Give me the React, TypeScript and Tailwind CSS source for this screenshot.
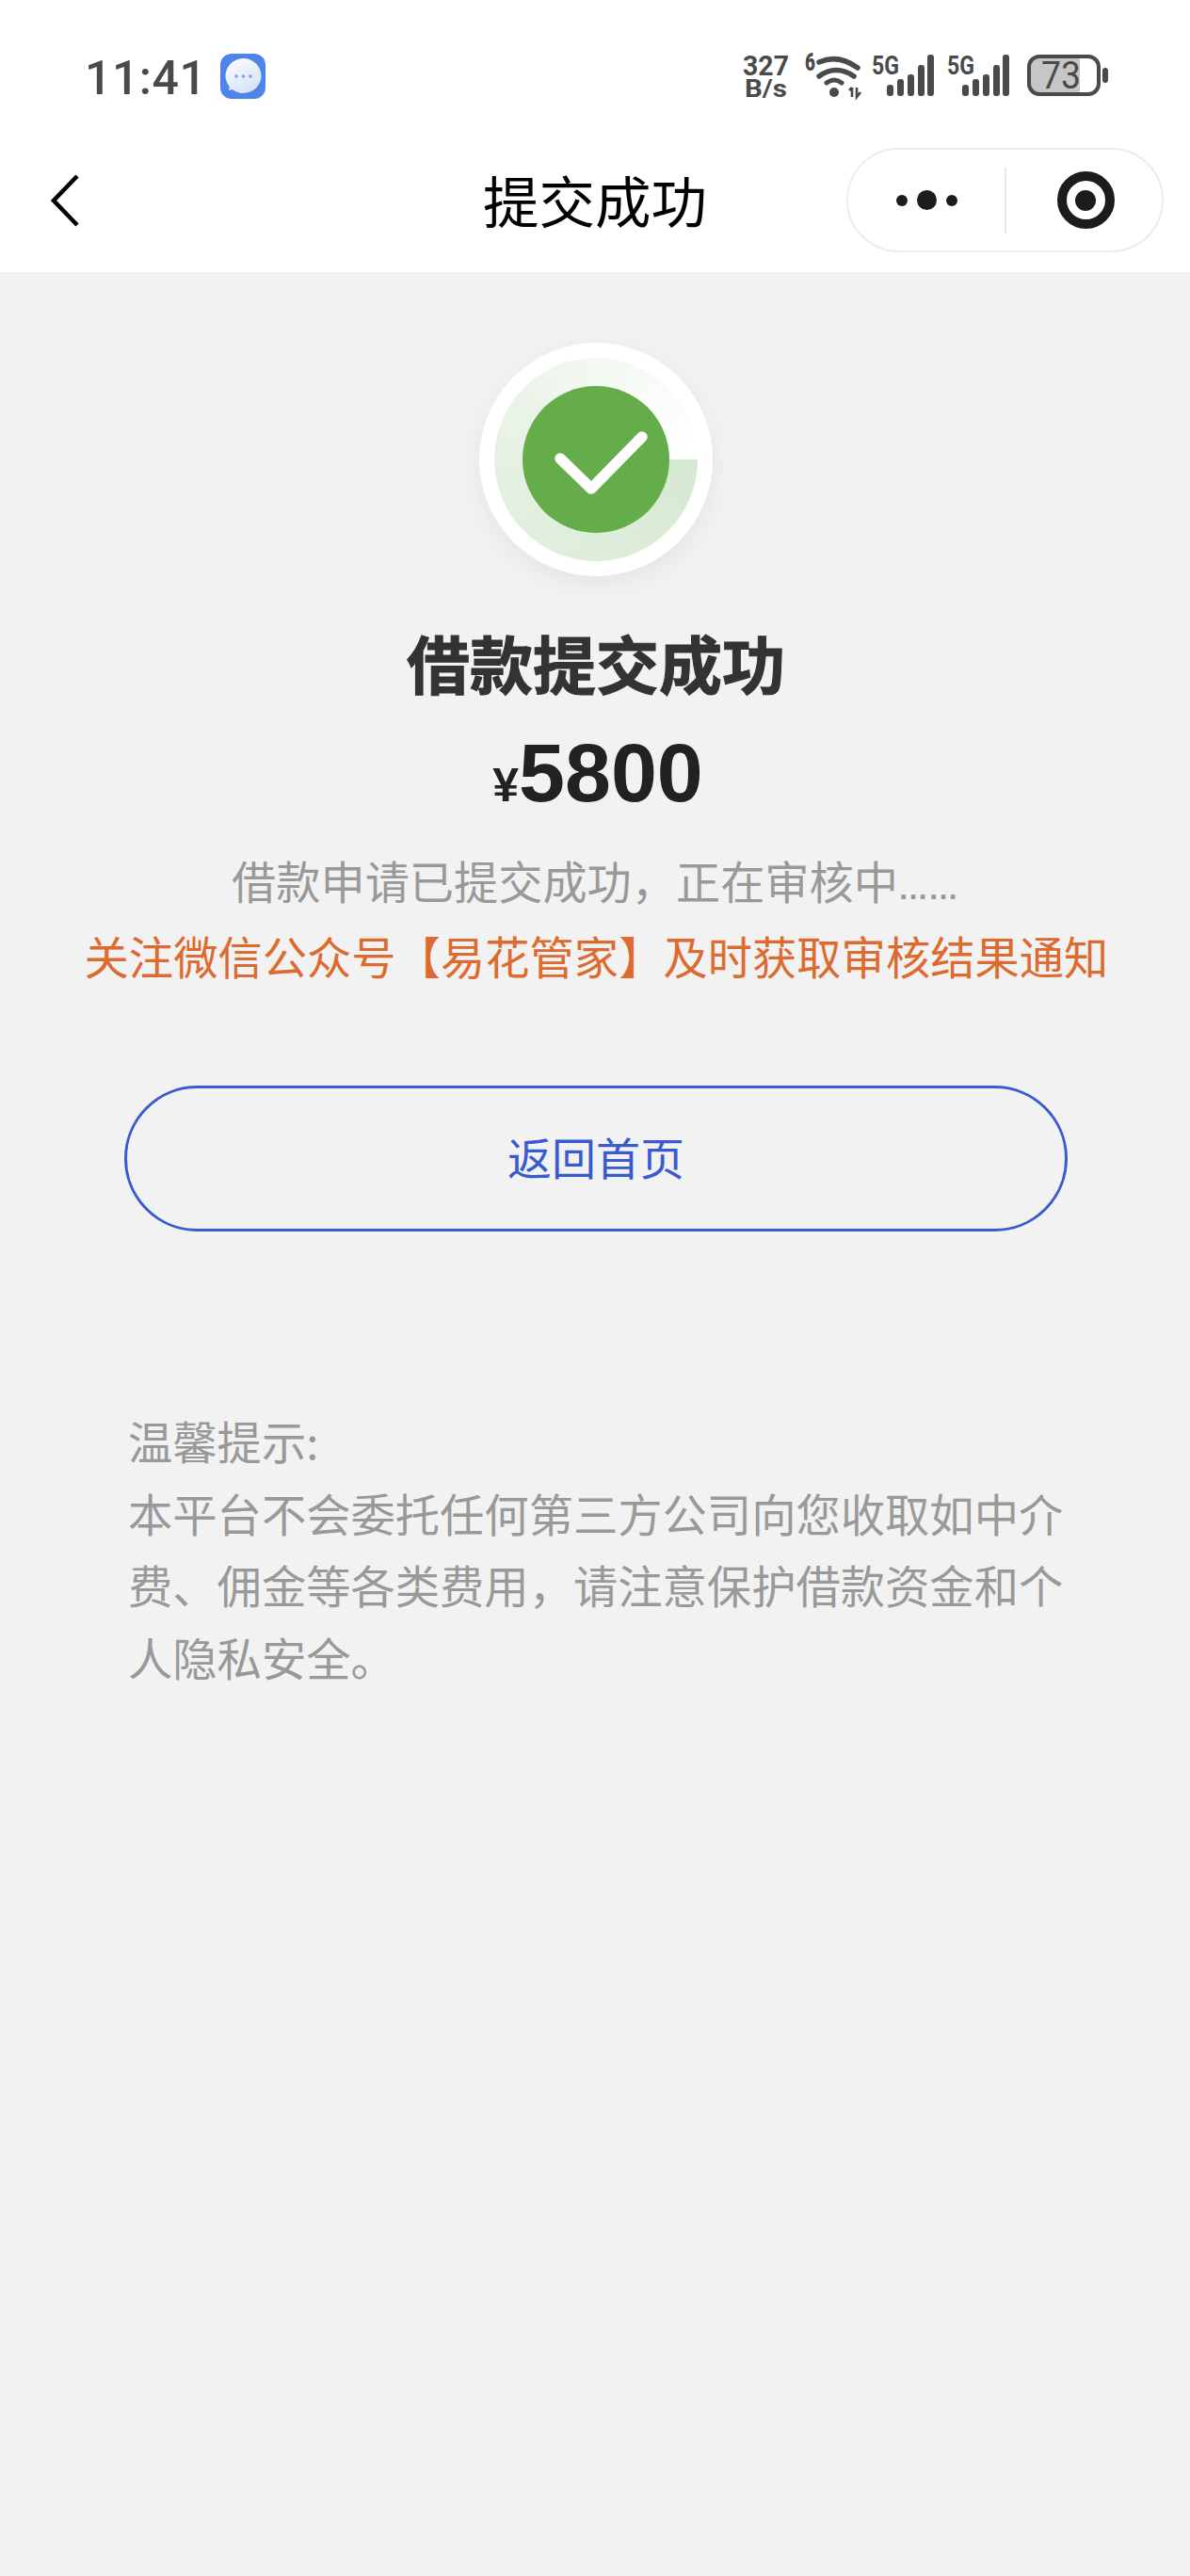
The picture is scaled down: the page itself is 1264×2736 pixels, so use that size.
const cjk = "font-['Noto_Sans_CJK_SC','Noto_Sans',sans-serif]";

function ChatIcon() {
  return (
    <svg width="48" height="48" viewBox="0 0 48 48" className="ml-[15px] mt-[-1px]">
      <defs>
        <linearGradient id="bubble" x1="0" y1="0" x2="0.6" y2="1">
          <stop offset="0" stopColor="#ffffff" />
          <stop offset="1" stopColor="#d5e3f8" />
        </linearGradient>
      </defs>
      <rect width="48" height="48" rx="12" fill="#4f84ea" />
      <path d="M9 39 L11 30 L17 37 Z" fill="#e6effb" />
      <ellipse cx="24.5" cy="23.5" rx="19" ry="18.5" fill="url(#bubble)" />
      <circle cx="17" cy="24" r="1.8" fill="#7fa4df" />
      <circle cx="24.5" cy="24" r="1.8" fill="#7fa4df" />
      <circle cx="32" cy="24" r="1.8" fill="#7fa4df" />
    </svg>
  );
}

function NetSpeed() {
  return (
    <svg width="50" height="46" viewBox="0 0 50 46" fill="#4a4a4a" className="font-['Roboto',sans-serif] overflow-visible">
      <text x="1" y="22" fontSize="29" fontWeight="700" textLength="49" lengthAdjust="spacingAndGlyphs">327</text>
      <text x="3" y="45" fontSize="26" fontWeight="700" textLength="45" lengthAdjust="spacingAndGlyphs">B/s</text>
    </svg>
  );
}

function Wifi() {
  return (
    <svg width="60" height="46" viewBox="0 0 60 46" fill="none" stroke="#4a4a4a" className="font-['Roboto',sans-serif] overflow-visible">
      <text x="0" y="17" fontSize="25" fontWeight="900" fill="#4a4a4a" stroke="none" textLength="11" lengthAdjust="spacingAndGlyphs">6</text>
      <path d="M15 8 Q35 -1 56 14" strokeWidth="5.5" strokeLinecap="round" />
      <path d="M15 23 Q33 10 52 23" strokeWidth="5.5" strokeLinecap="round" />
      <path d="M23 30 Q31 24 39 30" strokeWidth="5" strokeLinecap="round" />
      <circle cx="31" cy="40" r="5" fill="#4a4a4a" stroke="none" />
      <path d="M50 35 V45 M47 38 L50 35 M55 35 V45 L59 40" strokeWidth="2.6" />
    </svg>
  );
}

function Signal() {
  const bars = [
    [16, 32],
    [27, 26],
    [38, 21],
    [49, 11],
    [59, 0],
  ];
  return (
    <svg width="66" height="44" viewBox="0 0 66 44" fill="#4a4a4a" className="font-['Roboto',sans-serif] overflow-visible">
      <text x="0" y="21" fontSize="28" fontWeight="700" textLength="29" lengthAdjust="spacingAndGlyphs">5G</text>
      {bars.map(([x, y]) => (
        <rect key={x} x={x} y={y} width="7" height={44 - y} rx="3" />
      ))}
    </svg>
  );
}

function Battery() {
  return (
    <svg width="86" height="44" viewBox="0 0 86 44" className="font-['Roboto',sans-serif] overflow-visible">
      <path d="M10 3 H56 V41 H10 Q3 41 3 34 V10 Q3 3 10 3 Z" fill="#c6c6c6" />
      <rect x="2" y="2" width="74" height="40" rx="11" fill="none" stroke="#4a4a4a" strokeWidth="4" />
      <text x="15" y="36" fontSize="40" fontWeight="400" fill="#4a4a4a" textLength="42" lengthAdjust="spacingAndGlyphs">73</text>
      <rect x="80" y="14" width="6" height="16" rx="3" fill="#4a4a4a" />
    </svg>
  );
}

function SuccessBadge() {
  return (
    <div className="ml-[2px] w-[248px] h-[248px] rounded-full bg-white shadow-[0_8px_28px_rgba(0,0,0,0.06)] flex items-center justify-center">
      <div className="w-[216px] h-[216px] rounded-full bg-[conic-gradient(from_90deg,#d6e9d2_0deg,#e6f1e3_180deg,#ffffff_355deg)] flex items-center justify-center">
        <div className="w-[156px] h-[156px] rounded-full bg-[#65ad4b] flex items-center justify-center">
          <svg width="156" height="156" viewBox="0 0 156 156" fill="none">
            <path d="M40 77 L73 109 L127 54" stroke="#fff" strokeWidth="11.5" strokeLinecap="round" strokeLinejoin="round" />
          </svg>
        </div>
      </div>
    </div>
  );
}

export default function App() {
  return (
    <div className={`w-[1264px] h-[2736px] bg-[#f2f2f2] flex flex-col ${cjk}`}>
      <header className="bg-white h-[289px] shrink-0 flex flex-col">
        <div className="h-[157px] shrink-0 flex justify-between items-start pt-[58px] pl-[90px] pr-[87px]">
          <div className="flex items-start">
            <span className="font-['Roboto',sans-serif] font-medium text-[50px] leading-[50px] tracking-[0.5px] text-[#4a4a4a]">11:41</span>
            <ChatIcon />
          </div>
          <div className="flex items-start gap-[11px]">
            <NetSpeed />
            <div className="ml-[6px]"><Wifi /></div>
            <Signal />
            <div className="ml-[3px]"><Signal /></div>
            <div className="ml-[8px]"><Battery /></div>
          </div>
        </div>
        <div className="h-[111px] grid grid-cols-[1fr_auto_1fr] items-center">
          <div className="pl-[54px] flex items-center">
            <svg width="30" height="56" viewBox="0 0 30 56" fill="none">
              <path d="M28 2 L3 28 L28 54" stroke="#000" strokeWidth="4.5" />
            </svg>
          </div>
          <h1 className="mb-[4px] text-[59.5px] leading-[72px] font-normal text-black">提交成功</h1>
          <div className="flex justify-end pr-[28px]">
            <div className="w-[337px] h-[111px] rounded-full border-2 border-[#ececec] bg-white flex items-center">
              <div className="w-[166px] flex items-center justify-center gap-[10px]">
                <span className="w-[12px] h-[12px] rounded-full bg-[#1c1c1c]" />
                <span className="w-[21px] h-[21px] rounded-full bg-[#1c1c1c]" />
                <span className="w-[12px] h-[12px] rounded-full bg-[#1c1c1c]" />
              </div>
              <div className="w-[2px] h-[70px] bg-[#e8e8e8]" />
              <div className="flex-1 flex items-center justify-center pl-[3px]">
                <div className="w-[61px] h-[61px] rounded-full border-[10px] border-[#1c1c1c] flex items-center justify-center">
                  <div className="w-[22px] h-[22px] rounded-full bg-[#1c1c1c]" />
                </div>
              </div>
            </div>
          </div>
        </div>
      </header>

      <main className="flex flex-col items-center pt-[75px]">
        <SuccessBadge />
        <h2 className="ml-[2px] mt-[43px] text-[67px] leading-[96px] font-bold text-[#333333] [-webkit-text-stroke:1px_#333333]">借款提交成功</h2>
        <div className="ml-[6px] mt-[20px] h-[100px] flex items-baseline font-['Liberation_Sans',sans-serif] font-bold text-[#222222]">
          <span className="text-[50px] leading-[100px]">¥</span>
          <span className="text-[88px] leading-[100px]">5800</span>
        </div>
        <p className="mt-[24px] h-[80px] text-[47.2px] leading-[80px] text-[#999999]">
          借款申请已提交成功，正在审核中<span className="text-[32px] font-bold font-['Liberation_Sans',sans-serif]">……</span>
        </p>
        <p className="ml-[3px] text-[47.3px] leading-[80px] text-[#dd6a2f]">关注微信公众号【易花管家】及时获取审核结果通知</p>
        <button className="ml-[2px] mt-[98px] w-[1002px] h-[155px] pb-[6px] rounded-full border-[3px] border-[#3a5bcf] text-[47px] leading-none text-[#3a5bcf] flex items-center justify-center">
          返回首页
        </button>
        <div className="mt-[184px] w-[1002px] pl-[5px] text-[47.3px] leading-[76.5px] text-[#999999]">
          <div>温馨提示:</div>
          <div>本平台不会委托任何第三方公司向您收取如中介</div>
          <div>费、佣金等各类费用，请注意保护借款资金和个</div>
          <div>人隐私安全。</div>
        </div>
      </main>
    </div>
  );
}
